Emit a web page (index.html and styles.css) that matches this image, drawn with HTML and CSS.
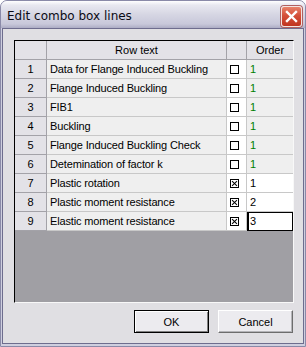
FILE: index.html
```html
<!DOCTYPE html>
<html lang="en">
<head>
  <meta charset="UTF-8">
  <title>Edit combo box lines</title>
  <link rel="stylesheet" href="styles.css">
</head>
<body>
  <div class="window">
    <div class="titlebar">
      <span class="title">Edit combo box lines</span>
      <button class="close" title="Close">
        <svg width="13" height="13" viewBox="0 0 13 13">
          <path d="M2 2 L11 11 M11 2 L2 11" stroke="#fff" stroke-width="2.4" stroke-linecap="square"/>
        </svg>
      </button>
    </div>

    <div class="client">
      <div class="grid">
        <div class="row head">
          <div class="cell num"></div>
          <div class="cell text">Row text</div>
          <div class="cell check"></div>
          <div class="cell order">Order</div>
        </div>

        <div class="row">
          <div class="cell num">1</div>
          <div class="cell text">Data for Flange Induced Buckling</div>
          <div class="cell check"><span class="box"></span></div>
          <div class="cell order">1</div>
        </div>
        <div class="row">
          <div class="cell num">2</div>
          <div class="cell text">Flange Induced Buckling</div>
          <div class="cell check"><span class="box"></span></div>
          <div class="cell order">1</div>
        </div>
        <div class="row">
          <div class="cell num">3</div>
          <div class="cell text">FIB1</div>
          <div class="cell check"><span class="box"></span></div>
          <div class="cell order">1</div>
        </div>
        <div class="row">
          <div class="cell num">4</div>
          <div class="cell text">Buckling</div>
          <div class="cell check"><span class="box"></span></div>
          <div class="cell order">1</div>
        </div>
        <div class="row">
          <div class="cell num">5</div>
          <div class="cell text">Flange Induced Buckling Check</div>
          <div class="cell check"><span class="box"></span></div>
          <div class="cell order">1</div>
        </div>
        <div class="row">
          <div class="cell num">6</div>
          <div class="cell text">Detemination of factor k</div>
          <div class="cell check"><span class="box"></span></div>
          <div class="cell order">1</div>
        </div>

        <div class="row editable">
          <div class="cell num">7</div>
          <div class="cell text">Plastic rotation</div>
          <div class="cell check"><span class="box checked"></span></div>
          <div class="cell order">1</div>
        </div>
        <div class="row editable">
          <div class="cell num">8</div>
          <div class="cell text">Plastic moment resistance</div>
          <div class="cell check"><span class="box checked"></span></div>
          <div class="cell order">2</div>
        </div>
        <div class="row editable">
          <div class="cell num">9</div>
          <div class="cell text">Elastic moment resistance</div>
          <div class="cell check"><span class="box checked"></span></div>
          <div class="cell order current">3</div>
        </div>

        <div class="empty"></div>
      </div>

      <div class="buttons">
        <button class="btn default">OK</button>
        <button class="btn">Cancel</button>
      </div>
    </div>
  </div>
</body>
</html>
```

FILE: styles.css
```css
* {
  box-sizing: border-box;
}

body {
  margin: 0;
  font-family: "Liberation Sans", Arial, sans-serif;
  font-size: 11px;
  color: #000;
}

.window {
  width: 306px;
  height: 347px;
  display: flex;
  flex-direction: column;
  background: #cfcfdf;
  border: 1px solid #8a8aa8;
  border-radius: 7px 7px 0 0;
  overflow: hidden;
}

.titlebar {
  height: 27px;
  flex: none;
  display: flex;
  align-items: flex-start;
  justify-content: space-between;
  padding: 0 3px 0 6px;
  background: linear-gradient(#ffffff 0%, #e8e8f0 15%, #d6d6e3 50%, #c8c8da 85%, #adadc4 100%);
}

.title {
  margin-top: 8px;
  font-family: "DejaVu Sans", sans-serif;
  font-size: 12px;
  line-height: 14px;
  color: #0a0a14;
}

.close {
  width: 21px;
  height: 21px;
  margin-top: 5px;
  padding: 0;
  display: flex;
  justify-content: center;
  align-items: center;
  border: 1px solid #f4e4e0;
  border-radius: 3px;
  background: linear-gradient(#e8826a, #d4503a 45%, #c0341f);
  box-shadow: 0 0 0 1px #b06060;
}

.client {
  flex: 1;
  display: flex;
  flex-direction: column;
  margin: 0 1px 2px;
  padding: 11px 9px 10px 11px;
  border: 1px solid #6e6d8e;
  background: #e0dfe3;
}

.grid {
  flex: 1;
  display: flex;
  flex-direction: column;
  border-left: 1px solid #000;
  border-top: 1px solid #000;
  border-right: 1px solid #f8f8f8;
  border-bottom: 1px solid #f8f8f8;
}

.row {
  display: grid;
  grid-template-columns: 32px 180px 20px 46px;
  height: 19px;
  flex: none;
}

.cell {
  line-height: 18px;
  white-space: nowrap;
  overflow: hidden;
  border-bottom: 1px solid #c8c8c8;
  border-right: 1px solid #c8c8c8;
  background: #efefef;
}

.cell.num {
  text-align: center;
  background: #e3e2e7;
  border-color: #a3a2a8;
}

.cell.text {
  padding-left: 3px;
  letter-spacing: -0.15px;
}

.cell.check {
  display: flex;
  align-items: center;
  padding-left: 3px;
  background: #fff;
}

.cell.order {
  padding-left: 3px;
  color: #008000;
  border-right: none;
}

.head .cell {
  background: #e3e2e7;
  border-color: #a3a2a8;
  text-align: center;
  padding-left: 0;
  color: #000;
  letter-spacing: 0;
}

.editable .cell.order {
  background: #fff;
  color: #000;
}

.cell.current {
  outline: 1px solid #000;
  outline-offset: -1px;
  box-shadow: inset 2px 0 #000;
}

.box {
  width: 9px;
  height: 9px;
  border: 1px solid #000;
  background: #fff;
  position: relative;
}

.box.checked::before,
.box.checked::after {
  content: "";
  position: absolute;
  left: 0;
  top: 3px;
  width: 7px;
  height: 1px;
  background: #000;
  transform: rotate(45deg);
}

.box.checked::after {
  transform: rotate(-45deg);
}

.empty {
  flex: 1;
  background: #a09fa4;
}

.buttons {
  display: flex;
  justify-content: flex-end;
  gap: 9px;
  margin-top: 7px;
  margin-right: 1px;
}

.btn {
  width: 75px;
  height: 23px;
  padding: 0;
  font-family: "Liberation Sans", Arial, sans-serif;
  font-size: 11px;
  color: #000;
  background: #ecebef;
  border: 1px solid;
  border-color: #fff #6d6d6d #6d6d6d #fff;
  box-shadow: inset -1px -1px #b4b4b8;
}

.btn.default {
  border-color: #000;
  box-shadow: inset 1px 1px #fff, inset -1px -1px #808080;
}
```
